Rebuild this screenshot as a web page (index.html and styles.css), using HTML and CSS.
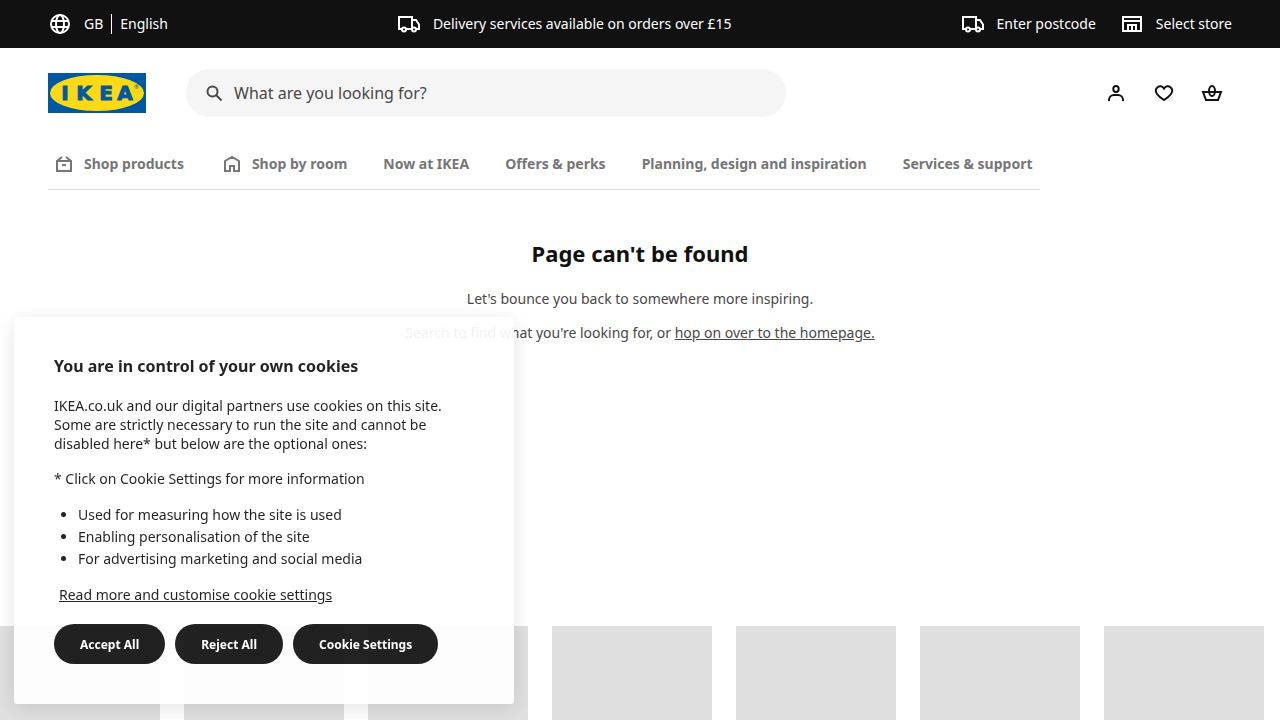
FILE: index.html
```html
<!DOCTYPE html>
<html lang="en-GB">
<head>
<meta charset="utf-8">
<meta name="viewport" content="width=device-width, initial-scale=1">
<title>Page can't be found - IKEA</title>
<link rel="stylesheet" href="styles.css">
</head>
<body>
<svg class="defs" aria-hidden="true">
  <symbol id="truck" viewBox="0 0 24 24"><g fill="none" stroke="currentColor" stroke-width="2"><path d="M5 17H2V5h13v12H9M15 8h4l3 4.500V17h-3"/><circle cx="7" cy="17.500" r="2"/><circle cx="17" cy="17.500" r="2"/></g></symbol>
</svg>
<div class="topbar">
  <button class="top-item" type="button">
    <svg class="icon" viewBox="0 0 24 24" fill="none" stroke="currentColor" stroke-width="2" aria-hidden="true"><circle cx="12" cy="12" r="9"/><ellipse cx="12" cy="12" rx="4" ry="9"/><path d="M3.500 9h17M3.500 15h17"/></svg>
    <span class="locale"><span class="country">GB</span><span class="language">English</span></span>
  </button>
  <a class="top-item" href="#delivery"><svg class="icon" aria-hidden="true"><use href="#truck"/></svg>Delivery services available on orders over £15</a>
  <div class="top-group">
    <button class="top-item" type="button"><svg class="icon" aria-hidden="true"><use href="#truck"/></svg>Enter postcode</button>
    <button class="top-item" type="button"><svg class="icon" viewBox="0 0 24 24" fill="none" stroke="currentColor" stroke-width="2" aria-hidden="true"><path d="M3 5h18v14H3zM3 9h18M8 19v-6h8v6M12 13v6"/></svg>Select store</button>
  </div>
</div>
<header class="header">
  <a class="logo" href="#home" aria-label="IKEA">
    <svg viewBox="0 0 98 40" width="98" height="40" aria-hidden="true">
      <path fill="#0058a3" d="M0 0h98v40H0z"/>
      <ellipse cx="49" cy="20" rx="47" ry="18" fill="#fbd914"/>
      <text class="logo-word" x="17 36 58 77" y="27">IKEA</text>
      <text class="logo-mark" x="86" y="16">®</text>
    </svg>
  </a>
  <form class="search" role="search">
    <svg class="search-icon" viewBox="0 0 24 24" fill="none" stroke="currentColor" stroke-width="2" aria-hidden="true"><circle cx="10.500" cy="10.500" r="5"/><path d="M14 14l5.500 5.500"/></svg>
    <input class="search-input" type="search" aria-label="Search" placeholder="What are you looking for?">
  </form>
  <div class="actions">
    <a class="action" href="#profile" aria-label="Profile"><svg class="icon" viewBox="0 0 24 24" fill="none" stroke="currentColor" stroke-width="2" aria-hidden="true"><ellipse cx="12" cy="8" rx="2.700" ry="3"/><path d="M5 20v-1a5 5 0 0 1 5-5h4a5 5 0 0 1 5 5v1"/></svg></a>
    <a class="action" href="#favourites" aria-label="Favourites"><svg class="icon" viewBox="0 0 24 24" fill="none" stroke="currentColor" stroke-width="2" aria-hidden="true"><path d="M12 7.500C10.500 5 7.500 4.500 5.500 6.200C3.300 8.300 3.600 11 5 13C6.700 15.400 9.300 17.300 12 19C14.700 17.300 17.300 15.400 19 13C20.400 11 20.700 8.300 18.500 6.200C16.500 4.500 13.500 5 12 7.500Z"/></svg></a>
    <a class="action" href="#basket" aria-label="Shopping basket"><svg class="icon" viewBox="0 0 24 24" fill="none" stroke="currentColor" stroke-width="2" aria-hidden="true"><path d="M3 11h18l-3 8H6z"/><ellipse cx="12" cy="10" rx="3" ry="5"/></svg></a>
  </div>
</header>
<nav class="nav" aria-label="Main">
  <a class="nav-link" href="#products"><svg class="icon" viewBox="0 0 24 24" fill="none" stroke="currentColor" stroke-width="2" aria-hidden="true"><path d="M10 5L5 9v10h14V9l-5-4M5 9h14M10 13h4"/></svg>Shop products</a>
  <a class="nav-link" href="#rooms"><svg class="icon" viewBox="0 0 24 24" fill="none" stroke="currentColor" stroke-width="2" aria-hidden="true"><path d="M5 19V9l7-4 7 4v10h-5v-5h-4v5z"/></svg>Shop by room</a>
  <a class="nav-link" href="#now">Now at IKEA</a>
  <a class="nav-link" href="#offers">Offers &amp; perks</a>
  <a class="nav-link" href="#planning">Planning, design and inspiration</a>
  <a class="nav-link" href="#services">Services &amp; support</a>
</nav>
<main>
  <section class="message">
    <h1>Page can't be found</h1>
    <p>Let's bounce you back to somewhere more inspiring.</p>
    <p>Search to find what you're looking for, or <a href="#home">hop on over to the homepage.</a></p>
  </section>
  <div class="tiles" aria-hidden="true">
    <div class="tile"></div><div class="tile"></div><div class="tile"></div><div class="tile"></div><div class="tile"></div><div class="tile"></div><div class="tile"></div>
  </div>
</main>
<section class="cookies" role="dialog" aria-labelledby="cookie-title">
  <h2 id="cookie-title">You are in control of your own cookies</h2>
  <p>IKEA.co.uk and our digital partners use cookies on this site. Some are strictly necessary to run the site and cannot be disabled here* but below are the optional ones:</p>
  <p>* Click on Cookie Settings for more information</p>
  <ul>
    <li>Used for measuring how the site is used</li>
    <li>Enabling personalisation of the site</li>
    <li>For advertising marketing and social media</li>
  </ul>
  <a class="cookie-link" href="#cookie-policy">Read more and customise cookie settings</a>
  <div class="cookie-buttons">
    <button type="button">Accept All</button>
    <button type="button">Reject All</button>
    <button type="button">Cookie Settings</button>
  </div>
</section>
</body>
</html>
```
FILE: styles.css
```css
* { box-sizing: border-box; }
body {
  margin: 0;
  min-height: 100vh;
  overflow-x: hidden;
  background: #fff;
  color: #111;
  font: 14px/20px "Noto Sans", sans-serif;
}
a { color: inherit; }
button { font: inherit; color: inherit; border: 0; background: none; padding: 0; cursor: pointer; }
.defs { position: absolute; width: 0; height: 0; }
.icon { flex: none; width: 24px; height: 24px; }

.topbar {
  display: flex;
  align-items: center;
  justify-content: space-between;
  min-height: 48px;
  padding: 0 48px;
  background: #111;
  color: #fff;
}
.top-group { display: flex; gap: 24px; }
.top-item { display: flex; align-items: center; gap: 12px; text-decoration: none; }
.locale { display: flex; }
.country { padding-right: 8px; border-right: 1px solid #fff; }
.language { padding-left: 8px; }

.header { display: flex; align-items: center; padding: 21px 48px 0; }
.logo { display: flex; margin-right: 40px; }
.logo-word {
  font: bold 20px "DejaVu Sans", sans-serif;
  fill: #0058a3;
  stroke: #0058a3;
  stroke-width: 1px;
  text-anchor: middle;
}
.logo-mark { font: 6px "Noto Sans", sans-serif; fill: #0058a3; }
.search {
  display: flex;
  align-items: center;
  flex: 0 1 600px;
  height: 48px;
  padding: 0 16px;
  gap: 8px;
  border-radius: 24px;
  background: #f5f5f5;
  color: #484848;
}
.search-icon { flex: none; width: 24px; height: 24px; }
.search-input {
  flex: 1;
  min-width: 0;
  border: 0;
  padding: 0;
  background: none;
  color: inherit;
  font: 16px/24px "Noto Sans", sans-serif;
}
.search-input::placeholder { color: #484848; opacity: 1; }
.actions { display: flex; gap: 8px; margin-left: auto; }
.action { display: flex; padding: 8px; }

.nav {
  display: flex;
  gap: 36px;
  width: fit-content;
  margin: 21px 48px 0;
  padding: 14px 8px 13px 4px;
  border-bottom: 1px solid #dfdfdf;
  color: #767676;
  font-weight: 700;
}
.nav-link { display: flex; align-items: center; gap: 8px; text-decoration: none; white-space: nowrap; }

.message { padding: 48px 24px 0; text-align: center; color: #484848; }
.message h1 { margin: 0 0 20px; color: #111; font-size: 22px; line-height: 31px; }
.message p { margin: 0 0 14px; }
.tiles { display: flex; gap: 24px; height: 94px; margin-top: 283px; overflow: hidden; }
.tile { flex: 0 0 160px; background: #dfdfdf; }

.cookies {
  position: fixed;
  left: 14px;
  bottom: 16px;
  width: 500px;
  padding: 40px;
  border-radius: 4px;
  background: #fff;
  box-shadow: 0 4px 20px rgba(0, 0, 0, 0.12);
  color: #111;
  opacity: 0.92;
  line-height: 19px;
}
.cookies h2 { margin: 0 0 21px; font-size: 16px; line-height: 18px; }
.cookies p { margin: 0 0 16px; }
.cookies ul { margin: 0 0 15px; padding-left: 24px; line-height: 22px; }
.cookie-link { display: block; width: fit-content; margin: 0 5px 20px; }
.cookie-buttons { display: flex; flex-wrap: wrap; gap: 10px; }
.cookie-buttons button {
  height: 40px;
  padding: 0 26px;
  border-radius: 20px;
  background: #111;
  color: #fff;
  font-size: 12px;
  font-weight: 700;
}
```
